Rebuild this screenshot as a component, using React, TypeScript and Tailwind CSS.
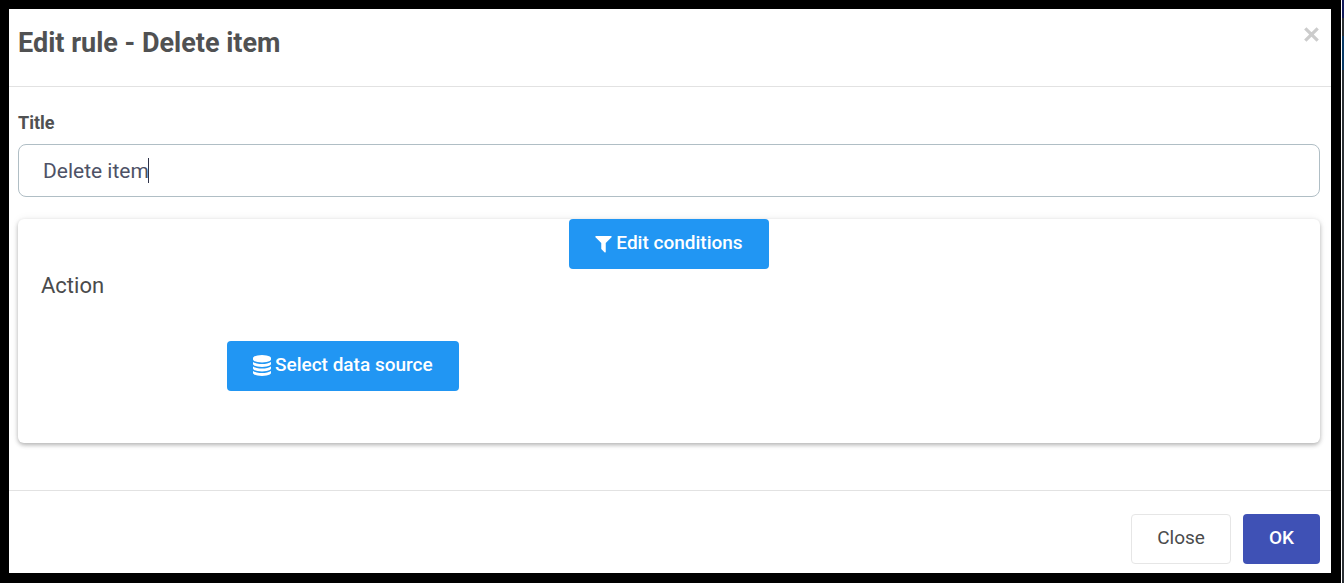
import { useState } from "react";

function FilterIcon() {
  return (
    <svg viewBox="195 0 1402 1792" className="h-[21px] w-[17px] shrink-0" fill="currentColor" aria-hidden="true">
      <path d="M1595 295q17 41-14 70l-493 493v742q0 42-39 59-13 5-25 5-27 0-45-19l-256-256q-19-19-19-45v-486l-493-493q-31-29-14-70 17-39 59-39h1280q42 0 59 39z" />
    </svg>
  );
}

function DatabaseIcon() {
  return (
    <svg viewBox="128 0 1536 1792" className="h-[21px] w-[18px] shrink-0" fill="currentColor" aria-hidden="true">
      <path d="M896 768q237 0 443-43t325-127v170q0 69-103 128t-280 93.5-385 34.5-385-34.5-280-93.5-103-128v-170q119 84 325 127t443 43zm0 768q237 0 443-43t325-127v170q0 69-103 128t-280 93.5-385 34.5-385-34.5-280-93.5-103-128v-170q119 84 325 127t443 43zm0-384q237 0 443-43t325-127v170q0 69-103 128t-280 93.5-385 34.5-385-34.5-280-93.5-103-128v-170q119 84 325 127t443 43zm0-1152q208 0 385 34.5t280 93.5 103 128v128q0 69-103 128t-280 93.5-385 34.5-385-34.5-280-93.5-103-128v-128q0-69 103-128t280-93.5 385-34.5z" />
    </svg>
  );
}

export default function App() {
  const [title, setTitle] = useState("Delete item");

  return (
    <div className="flex min-h-screen bg-[#2d3136] font-['Roboto',sans-serif] text-[#4a4b4c]">
      <div className="flex flex-1 border-r border-white bg-black pt-[9px] pr-[10px] pb-[10px] pl-[9px]">
        <div role="dialog" aria-labelledby="dialog-title" className="flex flex-1 flex-col bg-white">
          <header className="flex items-start justify-between border-b border-[#e2e2e2] pt-4 pr-[11px] pb-[25px] pl-[9px]">
            <h1 id="dialog-title" className="text-[27px] leading-9 font-bold text-[#505152]">
              Edit rule - Delete item
            </h1>
            <button type="button" aria-label="Close dialog" className="flex h-[18px] w-[18px] items-center justify-center text-[#cccccc]">
              <svg viewBox="0 0 14 14" className="size-[15px]" fill="none" stroke="currentColor" strokeWidth="3" aria-hidden="true">
                <path d="M1.2 1.2 12.8 12.8M12.8 1.2 1.2 12.8" />
              </svg>
            </button>
          </header>

          <main className="flex-1 pt-6 pr-[11px] pb-[46px] pl-[9px]">
            <label htmlFor="rule-title" className="block text-lg leading-6 font-bold text-[#505152]">
              Title
            </label>
            <div className="relative mt-[9px]">
              <input
                id="rule-title"
                type="text"
                value={title}
                onChange={(e) => setTitle(e.target.value)}
                className="block h-[53px] w-full rounded-lg border border-[#b0bec5] bg-white px-6 text-[21px] text-[#4e5266] outline-none"
              />
              <span aria-hidden="true" className="pointer-events-none absolute top-[14px] left-[130px] h-[25px] w-px bg-[#2f3349]" />
            </div>

            <section className="mt-[22px] rounded-md bg-white pb-[52px] shadow-[0_2px_4px_rgba(0,0,0,0.28),0_0_10px_rgba(0,0,0,0.06)]">
              <div className="flex justify-center">
                <button type="button" className="flex h-[50px] items-center gap-1 rounded bg-[#2196f3] px-[26px] pb-0.5 text-[19px] font-medium text-white">
                  <FilterIcon />
                  Edit conditions
                </button>
              </div>
              <h2 className="px-[23px] pt-px text-[22px] leading-8">Action</h2>
              <div className="mt-[39px] pl-[209px]">
                <button type="button" className="flex h-[50px] items-center gap-1 rounded bg-[#2196f3] px-[26px] pb-0.5 text-[19px] font-medium text-white">
                  <DatabaseIcon />
                  Select data source
                </button>
              </div>
            </section>
          </main>

          <footer className="flex justify-end gap-3 border-t border-[#e2e2e2] pt-[23px] pr-[11px] pb-[9px]">
            <button type="button" className="h-[50px] rounded border border-[#e6e6e6] bg-white px-[25px] pb-0.5 text-[19px]">
              Close
            </button>
            <button type="button" className="h-[50px] rounded bg-[#3f51b5] px-[26px] pb-0.5 text-[19px] font-medium text-white">
              OK
            </button>
          </footer>
        </div>
      </div>
      <div className="flex w-0.5 flex-col">
        <div className="h-[18px] bg-[#141c5c]" />
        <div className="mt-[18px] h-[34px] bg-[#0b3a66]" />
      </div>
    </div>
  );
}
